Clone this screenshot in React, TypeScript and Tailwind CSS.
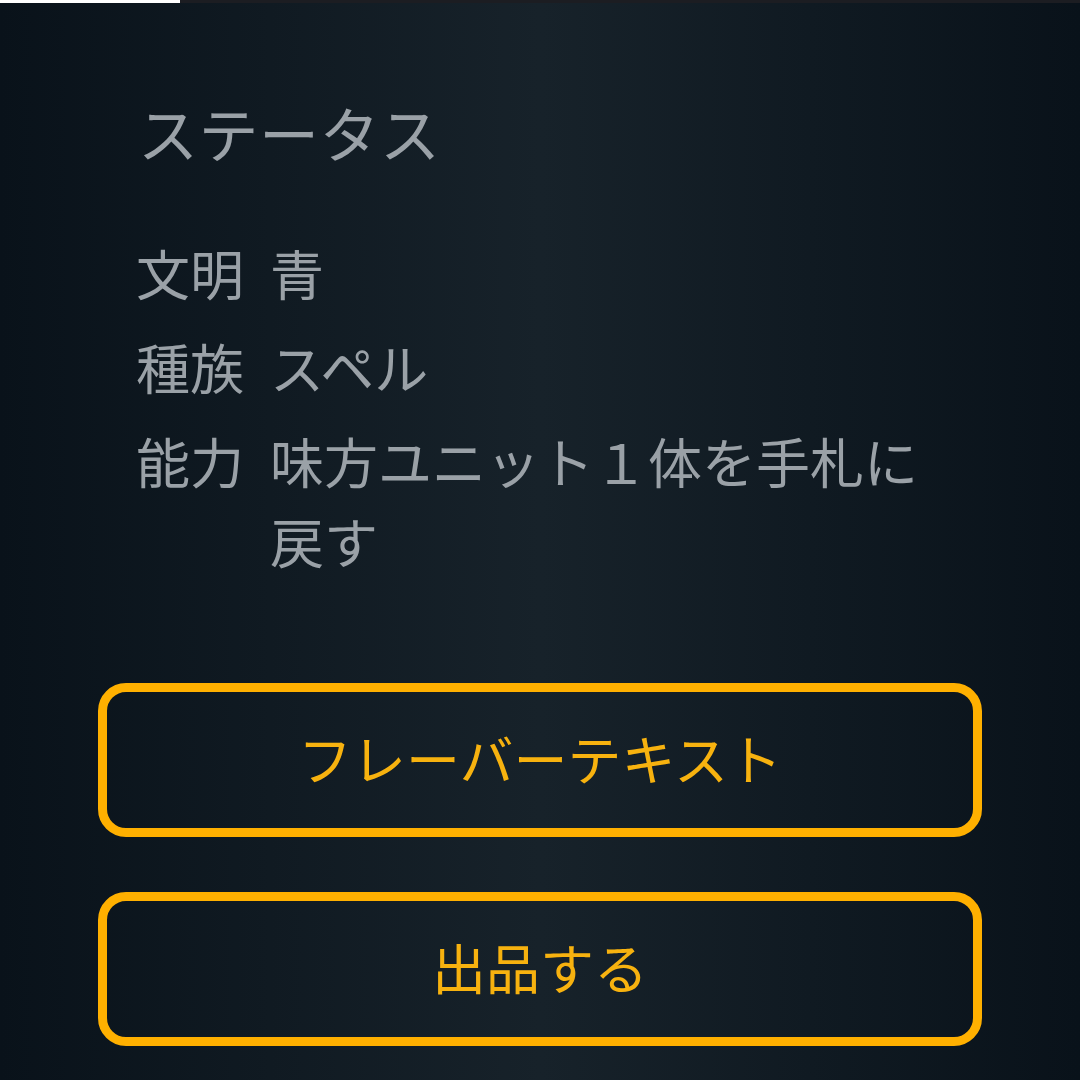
import React from 'react'

const rows = [
  { label: '文明', value: '青' },
  { label: '種族', value: 'スペル' },
  { label: '能力', value: '味方ユニット１体を手札に戻す' },
]

export default function App() {
  return (
    <div
      className="w-[1080px] h-[1080px] overflow-hidden flex flex-col bg-[linear-gradient(90deg,#09121a_0%,#17222a_50%,#09121a_100%)]"
      style={{ fontFamily: '"Noto Sans CJK JP", "Noto Sans", sans-serif' }}
    >
      {/* progress */}
      <div className="h-[3px] flex bg-[#1c1d22]">
        <div className="w-[180px] bg-white" />
      </div>

      <div className="pl-[138px] pr-[130px] pt-[89px]">
        <h2 className="text-[60px] leading-[80px] text-[#9aa1a7] font-normal tracking-[0.5px]">ステータス</h2>
        <dl className="mt-[61px] flex flex-col gap-[14px]">
          {rows.map((r) => (
            <div key={r.label} className="flex text-[54px] leading-[80px] text-[#9aa1a7]">
              <dt className="w-[134px] shrink-0 -ml-[2px]">{r.label}</dt>
              <dd className="flex-1">{r.value}</dd>
            </div>
          ))}
        </dl>
      </div>

      <div className="mt-[102px] px-[98px] flex flex-col gap-[55px]">
        <button className="h-[154px] w-full rounded-[28px] border-[9px] border-[#ffb000] text-[#f7b20f] text-[54px] pb-[6px] flex items-center justify-center">
          フレーバーテキスト
        </button>
        <button className="h-[154px] w-full rounded-[28px] border-[9px] border-[#ffb000] text-[#f7b20f] text-[54px] pb-[6px] flex items-center justify-center">
          出品する
        </button>
      </div>
    </div>
  )
}
